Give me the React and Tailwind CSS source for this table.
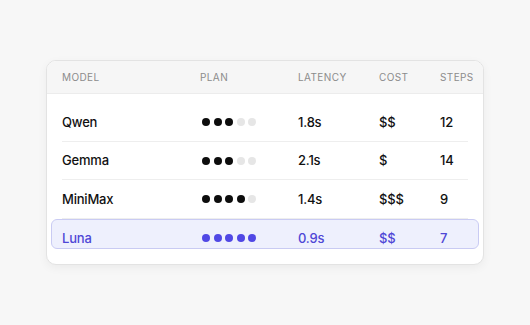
import React from 'react'

const rows = [
  { model: 'Qwen', plan: 3, latency: '1.8s', cost: '$$', steps: '12' },
  { model: 'Gemma', plan: 3, latency: '2.1s', cost: '$', steps: '14' },
  { model: 'MiniMax', plan: 4, latency: '1.4s', cost: '$$$', steps: '9' },
]

const cols = 'grid grid-cols-[138px_98px_81px_61px_1fr] items-center'

function Dots({ filled, active }) {
  return (
    <div className="ml-[2px] flex items-center gap-[3.5px]">
      {[0, 1, 2, 3, 4].map((i) => (
        <span
          key={i}
          className={`h-[8px] w-[8px] rounded-full ${
            active ? 'bg-[#5048e5]' : i < filled ? 'bg-[#0d0d0d]' : 'bg-[#e6e6e6]'
          }`}
        />
      ))}
    </div>
  )
}

export default function App() {
  return (
    <div className="flex h-[325px] w-[530px] items-start justify-center bg-[#f7f7f7] pt-[60px] font-['Inter',sans-serif]">
      <div className="w-[438px] overflow-hidden rounded-[10px] border border-[#e3e3e3] bg-white shadow-[0_3px_10px_rgba(0,0,0,0.05)]">
        <div className={`${cols} h-[33px] border-b border-[#ececec] bg-[#f6f6f6] px-[15px] text-[10px] tracking-[0.04em] text-[#8c8c8c]`}>
          <span>MODEL</span>
          <span>PLAN</span>
          <span>LATENCY</span>
          <span>COST</span>
          <span>STEPS</span>
        </div>
        <div className="px-[4px] pb-[15px] pt-[9px] text-[13px] font-medium tracking-[-0.015em] text-[#111]">
          {rows.map((r) => (
            <div key={r.model} className="px-[11px]">
              <div className={`${cols} h-[38.5px] border-b border-[#eeeeee] pt-[1px]`}>
                <span>{r.model}</span>
                <Dots filled={r.plan} />
                <span>{r.latency}</span>
                <span>{r.cost}</span>
                <span>{r.steps}</span>
              </div>
            </div>
          ))}
          <div className={`${cols} h-[30px] items-start rounded-[6px] border border-[#c9cbf3] bg-[#eef0fd] px-[10px] pt-[10px] text-[#4f47d6]`}>
            <span className="leading-[16px]">Luna</span>
            <div className="flex h-[16px] items-center">
              <Dots filled={5} active />
            </div>
            <span className="leading-[16px]">0.9s</span>
            <span className="leading-[16px]">$$</span>
            <span className="leading-[16px]">7</span>
          </div>
        </div>
      </div>
    </div>
  )
}
